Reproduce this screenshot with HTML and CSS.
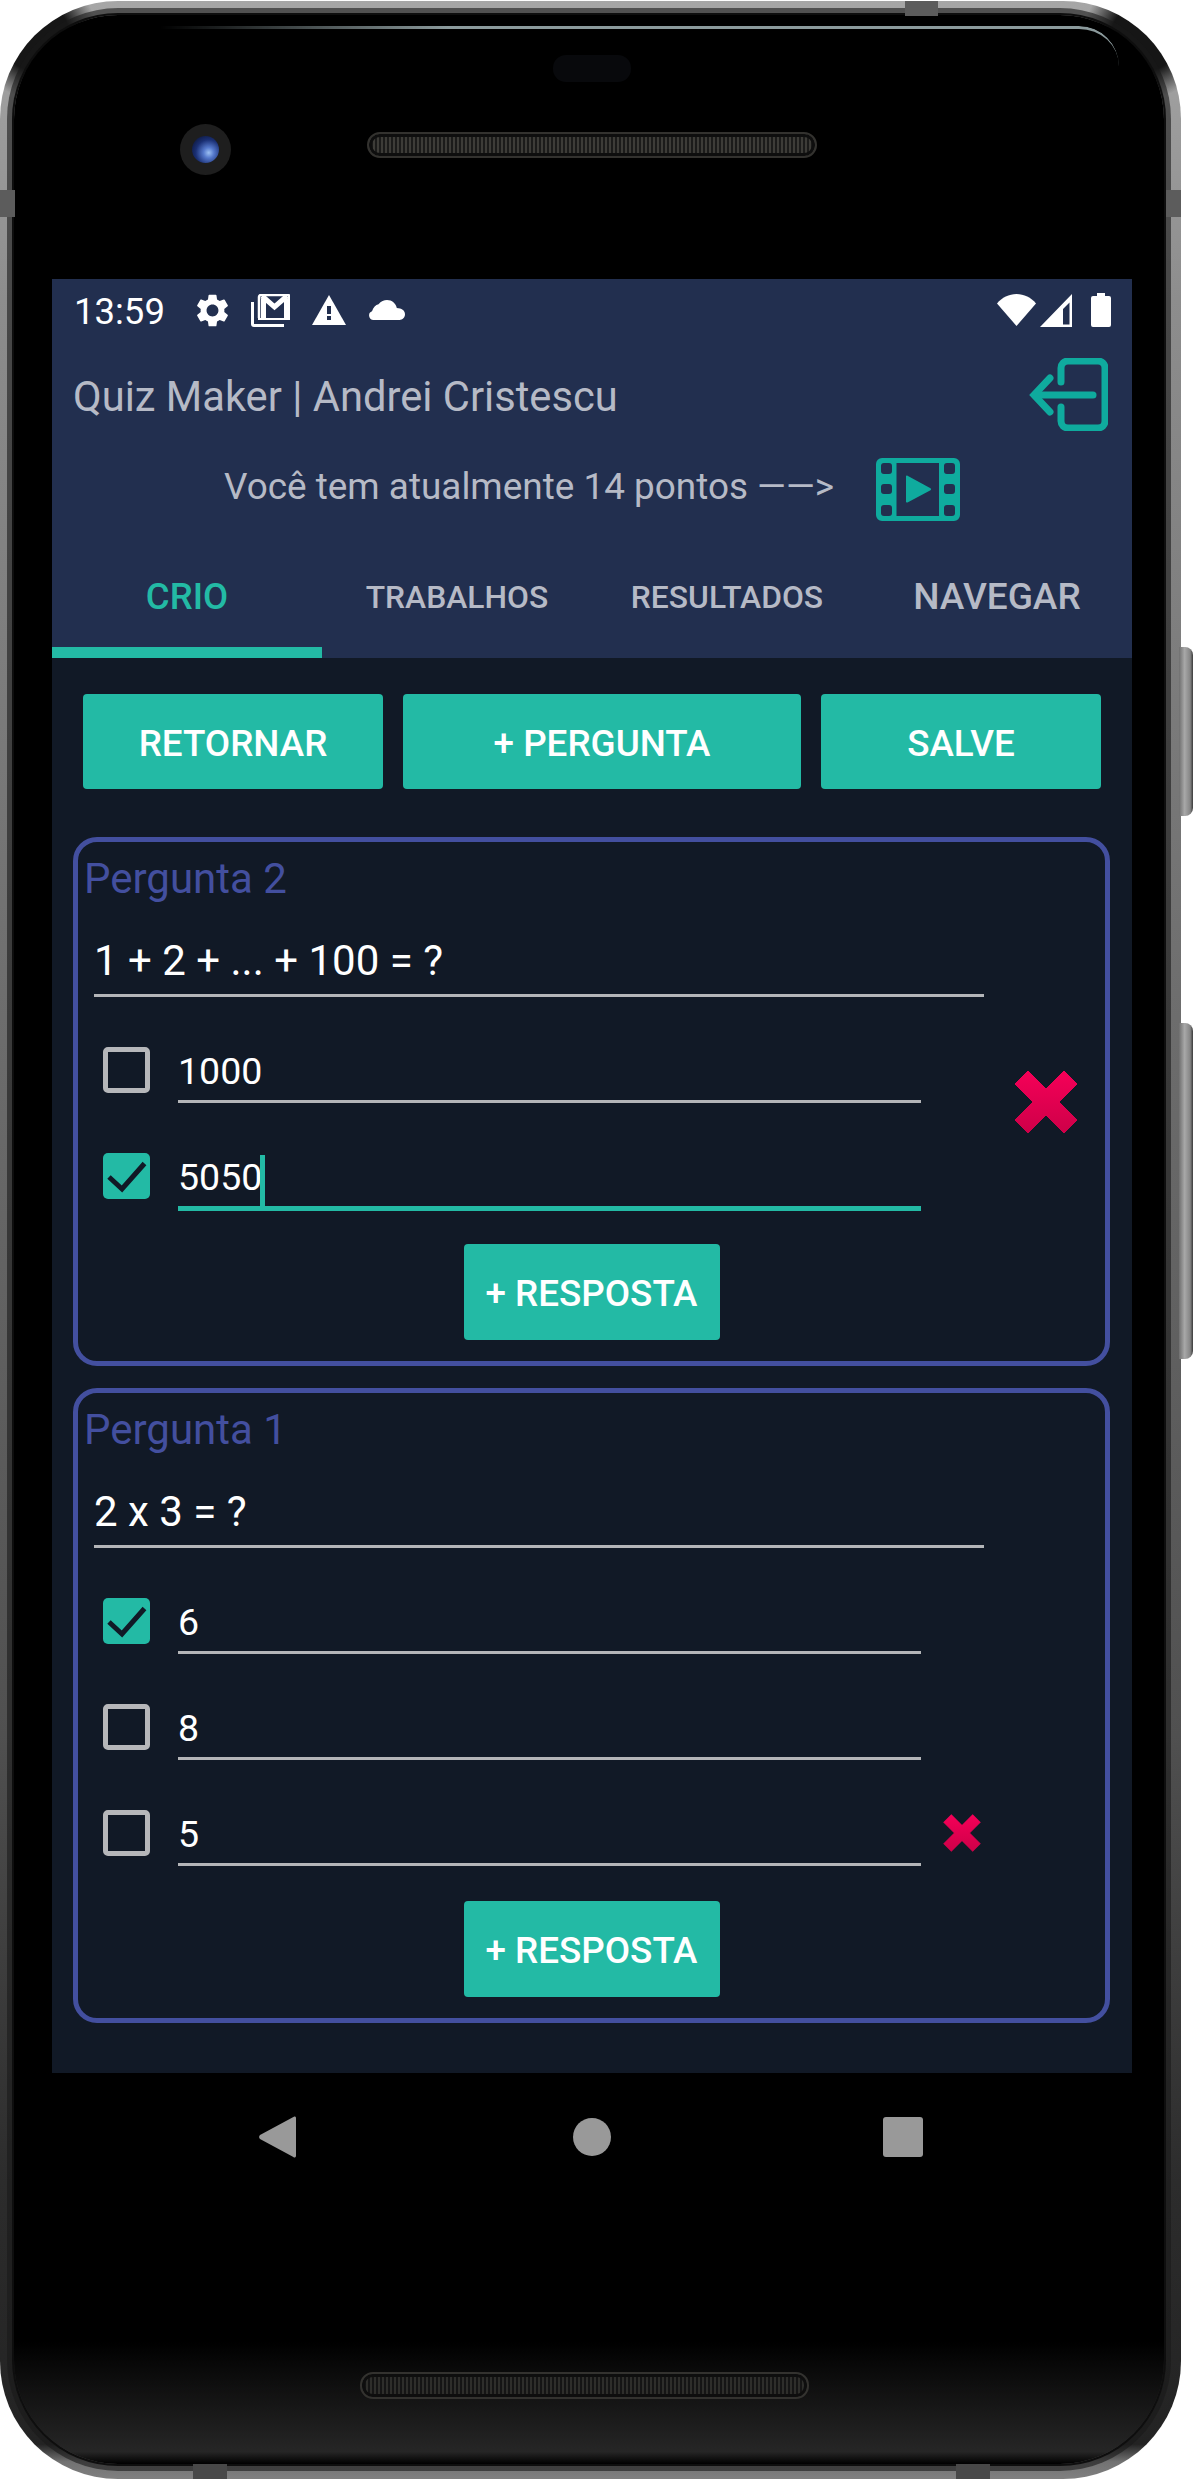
FILE: index.html
```html
<!DOCTYPE html>
<html lang="pt">
<head>
<meta charset="utf-8">
<title>Quiz Maker</title>
<link rel="stylesheet" href="styles.css">
</head>
<body>
<div class="device">
  <span class="side-btn power"></span>
  <span class="side-btn volume"></span>
  <span class="seam seam-top"></span>
  <span class="seam seam-left"></span>
  <span class="seam seam-right"></span>
  <span class="seam seam-bl"></span>
  <span class="seam seam-br"></span>
  <span class="glass-line"></span>
  <div class="face">
    <div class="bezel-top">
      <div class="sensor"></div>
      <div class="cam-row">
        <div class="camera"><div class="lens"></div></div>
        <div class="speaker"></div>
      </div>
    </div>

    <main class="screen">
      <header class="appbar">
        <div class="status">
          <span class="time">13:59</span>
          <svg class="st st-gear" viewBox="2.6 2 18.8 20"><path fill="#fff" d="M19.14 12.94c.04-.3.06-.61.06-.94 0-.32-.02-.64-.07-.94l2.03-1.58a.49.49 0 0 0 .12-.61l-1.92-3.32a.488.488 0 0 0-.59-.22l-2.39.96c-.5-.38-1.03-.7-1.62-.94l-.36-2.54a.484.484 0 0 0-.48-.41h-3.84c-.24 0-.43.17-.47.41l-.36 2.54c-.59.24-1.13.57-1.62.94l-2.39-.96c-.22-.08-.47 0-.59.22L2.74 8.87c-.12.21-.08.47.12.61l2.03 1.58c-.05.3-.09.63-.09.94s.02.64.07.94l-2.03 1.58a.49.49 0 0 0-.12.61l1.92 3.32c.12.22.37.29.59.22l2.39-.96c.5.38 1.03.7 1.62.94l.36 2.54c.05.24.24.41.48.41h3.84c.24 0 .44-.17.47-.41l.36-2.54c.59-.24 1.13-.56 1.62-.94l2.39.96c.22.08.47 0 .59-.22l1.92-3.32c.12-.22.07-.47-.12-.61l-2.01-1.58zM12 15.6c-1.98 0-3.6-1.62-3.6-3.6s1.62-3.6 3.6-3.6 3.6 1.62 3.6 3.6-1.62 3.6-3.6 3.6z"/></svg>
          <svg class="st st-mail" viewBox="0 0 39 33"><path fill="none" stroke="#fff" stroke-width="3" d="M1.5 8v22a1.5 1.5 0 0 0 1.500 1.500h30"/><path fill="none" stroke="#fff" stroke-width="2.500" d="M8 24V3a2 2 0 0 1 2-2h27a1 1 0 0 1 1 1v22"/><path fill="none" stroke="#fff" stroke-width="5" d="M11 2l12.500 11L36 2"/><path fill="#fff" d="M10 25h5V5h-5zM33 25h4V5h-4z"/><path fill="#fff" d="M7 24h32v2H7z"/></svg>
          <svg class="st st-warn" viewBox="0 0 34 30"><path fill="#fff" d="M17 0L34 30H0z"/><path fill="#222f4f" d="M15 11h4v8h-4zM15 21h4v4h-4z"/></svg>
          <svg class="st st-cloud" viewBox="0 0 36 20"><path fill="#fff" d="M4.500 20A4.500 4.500 0 0 1 3 11.300C4.500 7 6.500 5 9.500 4.300 12 1 15 0 18 0c5 0 8.800 3.200 9.800 8.100C32.500 8.200 36 10.500 36 14.300c0 3.200-2.500 5.700-5.500 5.700z"/></svg>
          <span class="status-gap"></span>
          <svg class="st st-wifi" viewBox="0 0 39 32"><path fill="#fff" d="M19.500 32L0 9.500C5 3.500 12 0 19.500 0S34 3.500 39 9.500z"/></svg>
          <svg class="st st-signal" viewBox="0 0 32 33"><path fill="#fff" fill-rule="evenodd" d="M32 0v33H0zM29.500 8.500L23 15v15.500h6.500z"/></svg>
          <svg class="st st-battery" viewBox="0 0 20 34"><path fill="#fff" d="M6 0h8v3h4a2 2 0 0 1 2 2v27a2 2 0 0 1-2 2H2a2 2 0 0 1-2-2V5a2 2 0 0 1 2-2h4z"/></svg>
        </div>
        <div class="title-row">
          <h1 class="title">Quiz Maker | Andrei Cristescu</h1>
          <svg class="ic-logout" viewBox="0 0 79 73"><g fill="none" stroke="#0fab9e" stroke-width="7" stroke-linecap="round"><path d="M32 24V10a7 7 0 0 1 7-7h30a7 7 0 0 1 7 7v53a7 7 0 0 1-7 7H39a7 7 0 0 1-7-7V49"/><path d="M64 37H6"/><path d="M21 20L5 37l16 17" stroke-linejoin="miter"/></g></svg>
        </div>
        <div class="notice-row">
          <span class="notice">Você tem atualmente 14 pontos ——&gt;</span>
          <svg class="ic-film" viewBox="0 0 84 63"><path fill="#0fab9e" fill-rule="evenodd" d="M6 0h72a6 6 0 0 1 6 6v51a6 6 0 0 1-6 6H6a6 6 0 0 1-6-6V6a6 6 0 0 1 6-6zM8 5a3 3 0 0 0-3 3v5a3 3 0 0 0 3 3h5a3 3 0 0 0 3-3V8a3 3 0 0 0-3-3zM8 26a3 3 0 0 0-3 3v4a3 3 0 0 0 3 3h5a3 3 0 0 0 3-3v-4a3 3 0 0 0-3-3zM8 47a3 3 0 0 0-3 3v5a3 3 0 0 0 3 3h5a3 3 0 0 0 3-3v-5a3 3 0 0 0-3-3zM71 5a3 3 0 0 0-3 3v5a3 3 0 0 0 3 3h5a3 3 0 0 0 3-3V8a3 3 0 0 0-3-3zM71 26a3 3 0 0 0-3 3v4a3 3 0 0 0 3 3h5a3 3 0 0 0 3-3v-4a3 3 0 0 0-3-3zM71 47a3 3 0 0 0-3 3v5a3 3 0 0 0 3 3h5a3 3 0 0 0 3-3v-5a3 3 0 0 0-3-3zM20.500 5v53H63V5zM30 18.500c0-.8.8-1.200 1.500-.8l23 12.600c.7.500.7 1.400 0 1.900l-23 12.200c-.7.400-1.500 0-1.500-.8z"/></svg>
        </div>
        <nav class="tabs">
          <span class="tab tab-active">CRIO</span>
          <span class="tab tab-small">TRABALHOS</span>
          <span class="tab tab-small">RESULTADOS</span>
          <span class="tab">NAVEGAR</span>
        </nav>
      </header>

      <section class="content">
        <div class="actions">
          <button class="btn btn-back">RETORNAR</button>
          <button class="btn btn-add">+ PERGUNTA</button>
          <button class="btn btn-save">SALVE</button>
        </div>

        <article class="card">
          <div class="card-label">Pergunta 2</div>
          <div class="question">1 + 2 + ... + 100 = ?</div>
          <div class="answers">
            <div class="answer">
              <span class="check"></span>
              <div class="field">1000</div>
            </div>
            <div class="answer">
              <span class="check check-on"><svg viewBox="0 0 46 46"><path fill="none" stroke="#111926" stroke-width="5" d="M5.500 24l13 12L41 10.500"/></svg></span>
              <div class="field field-focus">5050<span class="caret"></span></div>
            </div>
          </div>
          <button class="btn btn-answer">+ RESPOSTA</button>
          <svg class="del del-big" viewBox="0 0 64 64"><defs><linearGradient id="redx" gradientUnits="userSpaceOnUse" x1="0" y1="0" x2="0" y2="64"><stop offset="0" stop-color="#f60058"/><stop offset="1" stop-color="#cd0048"/></linearGradient></defs><path fill="url(#redx)" stroke="url(#redx)" stroke-width="1" stroke-linejoin="round" d="M14 1l18 18L50 1l13 13-18 18 18 18-13 13-18-18-18 18L1 50l18-18L1 14z"/></svg>
        </article>

        <article class="card">
          <div class="card-label">Pergunta 1</div>
          <div class="question">2 x 3 = ?</div>
          <div class="answers">
            <div class="answer">
              <span class="check check-on"><svg viewBox="0 0 46 46"><path fill="none" stroke="#111926" stroke-width="5" d="M5.500 24l13 12L41 10.500"/></svg></span>
              <div class="field">6</div>
            </div>
            <div class="answer">
              <span class="check"></span>
              <div class="field">8</div>
            </div>
            <div class="answer">
              <span class="check"></span>
              <div class="field">5</div>
              <svg class="del del-small" viewBox="0 0 64 64"><path fill="url(#redx)" stroke="url(#redx)" stroke-width="1" stroke-linejoin="round" d="M14 1l18 18L50 1l13 13-18 18 18 18-13 13-18-18-18 18L1 50l18-18L1 14z"/></svg>
            </div>
          </div>
          <button class="btn btn-answer">+ RESPOSTA</button>
        </article>
      </section>
    </main>

    <div class="sysnav">
      <svg class="nav-back" viewBox="0 0 37 42"><path fill="#999" d="M37 2v38a1.500 1.500 0 0 1-2.600 1L1 23a3 3 0 0 1 0-4L34.400 1A1.500 1.500 0 0 1 37 2z"/></svg>
      <span class="nav-home"></span>
      <span class="nav-recent"></span>
    </div>
    <div class="speaker speaker-bottom"></div>
  </div>
</div>
</body>
</html>
```

FILE: styles.css
```css
* { box-sizing: border-box; }
html, body { margin: 0; padding: 0; background: #fff; }
body { font-family: Roboto, "Liberation Sans", sans-serif; width: 1194px; height: 2480px; overflow: hidden; }

.device {
  position: relative;
  width: 1181px;
  height: 2478px;
  margin-top: 1px;
  padding: 14px 17px 15px 14px;
  border-radius: 118px;
  background:
    radial-gradient(circle 62px at 36px 36px, #161616 55%, transparent 100%),
    radial-gradient(circle 62px at 1145px 36px, #161616 55%, transparent 100%),
    linear-gradient(180deg, #a6a6a6 0, #8d8d8d 12%, #6e6e6e 40%, #505050 70%, #2c2c2c 88%, #232323 98.600%, #727272 99.300%, #808080 100%);
}
.side-btn {
  position: absolute;
  left: 1179px;
  width: 14px;
  border-radius: 0 8px 8px 0;
  background: linear-gradient(90deg, #6f6f6f, #a8a8a8 40%, #858585 80%, #3a3a3a);
}
.power { top: 646px; height: 169px; }
.volume { top: 1022px; height: 336px; }
.seam { position: absolute; background: #5c5c5c; }
.seam-top { top: 0; left: 905px; width: 33px; height: 15px; }
.seam-left { top: 189px; left: 0; width: 15px; height: 27px; }
.seam-right { top: 189px; right: 0; width: 15px; height: 27px; }
.seam-bl { bottom: 0; left: 193px; width: 34px; height: 15px; background: #484848; }
.seam-br { bottom: 0; left: 956px; width: 34px; height: 15px; background: #484848; }
.glass-line {
  position: absolute;
  z-index: 1;
  top: 25px;
  left: 160px;
  right: 62px;
  height: 40px;
  border-top: 3px solid #8b9a9c;
  border-top-right-radius: 70px;
  -webkit-mask-image: linear-gradient(90deg, transparent, #000 30%);
  mask-image: linear-gradient(90deg, transparent, #000 30%);
}
.face {
  height: 100%;
  padding: 0 32px 0 38px;
  border-radius: 104px;
  background: linear-gradient(180deg, #000 0, #000 95%, #262626 99.500%, #000 100%);
  box-shadow: 0 0 0 2px #0e0e0e, 0 0 0 7px rgba(25, 25, 25, .6);
}

.bezel-top { height: 264px; padding-top: 40px; }
.sensor { width: 78px; height: 27px; margin: 0 auto; border-radius: 13px; background: #08090c; }
.cam-row { display: flex; align-items: flex-start; gap: 136px; margin-top: 42px; padding-left: 128px; }
.camera {
  display: flex;
  align-items: center;
  justify-content: center;
  width: 51px;
  height: 51px;
  border-radius: 50%;
  background: #1e1e1e;
}
.lens {
  width: 27px;
  height: 27px;
  border-radius: 50%;
  background: radial-gradient(circle at 62% 62%, #9cc0f2 0, #5579cc 22%, #1a2f73 55%, #060a1c 100%);
}
.speaker {
  width: 450px;
  height: 26px;
  margin-top: 8px;
  border: 2px solid #33322f;
  border-radius: 13px;
  background: repeating-linear-gradient(90deg, #3d3c38 0, #3d3c38 2px, #1b1b1a 2px, #1b1b1a 4px);
  box-shadow: inset 0 0 0 3px #0e0e0e;
}
.speaker-bottom { width: 449px; height: 27px; margin: 193px 0 0 308px; background: repeating-linear-gradient(90deg, #2e2e2b 0, #2e2e2b 2px, #151515 2px, #151515 4px); }

.screen { height: 1794px; background: #111926; display: flex; flex-direction: column; }
.appbar { background: #222f4f; height: 379px; color: #b6bac6; }
.status { display: flex; align-items: center; height: 62px; padding: 0 21px 0 22px; }
.time { width: 90px; color: #fff; font-size: 36.500px; line-height: 62px; margin-top: 4px; white-space: nowrap; }
.st { display: block; flex: none; }
.st-gear { width: 31px; height: 33px; margin-left: 33px; }
.st-mail { width: 39px; height: 33px; margin-left: 23px; }
.st-warn { width: 34px; height: 30px; margin-left: 22px; }
.st-cloud { width: 36px; height: 20px; margin-left: 23px; }
.status-gap { flex: 1; }
.st-wifi { width: 39px; height: 32px; }
.st-signal { width: 32px; height: 33px; margin-left: 4px; }
.st-battery { width: 20px; height: 34px; margin-left: 19px; }

.title-row { display: flex; align-items: center; justify-content: space-between; height: 106px; padding: 0 24px 0 21px; }
.title { margin: 0; padding-top: 6px; font-size: 41.700px; font-weight: 400; line-height: 60px; white-space: nowrap; }
.ic-logout { display: block; width: 79px; height: 73px; }
.notice-row { display: flex; align-items: center; height: 85px; padding-left: 172px; }
.notice { font-size: 36.900px; line-height: 50px; width: 652px; padding-bottom: 6px; white-space: nowrap; }
.ic-film { display: block; width: 84px; height: 63px; }
.tabs { display: flex; height: 126px; }
.tab {
  display: flex;
  align-items: center;
  justify-content: center;
  width: 270px;
  padding-top: 14px;
  border-bottom: 11px solid transparent;
  font-size: 37px;
  font-weight: 500;
}
.tab-small { font-size: 31.800px; }
.tab-active { color: #23baa5; border-bottom-color: #23baa5; font-size: 36.500px; }

.content { flex: 1; padding: 36px 22px 0 21px; }
.actions { display: flex; gap: 20px; padding-left: 10px; margin-bottom: 48px; }
.btn {
  display: block;
  border: 0;
  border-radius: 4px;
  background: #23baa5;
  color: #fff;
  font-family: inherit;
  font-size: 36.800px;
  font-weight: 500;
  padding: 3px 0 0;
  white-space: nowrap;
}
.actions .btn { height: 95px; }
.btn-back { width: 300px; }
.btn-add { width: 398px; }
.btn-save { width: 280px; }

.card {
  position: relative;
  width: 1037px;
  margin-bottom: 22px;
  padding: 9px 0 21px;
  border: 5px solid #434f9f;
  border-radius: 24px;
}
.card-label { padding-left: 6px; color: #434f9f; font-size: 42px; line-height: 56px; }
.question {
  width: 890px;
  margin: 26px 0 0 16px;
  padding: 0 0 5px;
  border-bottom: 3px solid #b4b5b8;
  color: #fff;
  font-size: 42px;
  line-height: 56px;
}
.answers { display: flex; flex-direction: column; gap: 49px; margin-top: 49px; padding-left: 25px; }
.answer { display: flex; align-items: flex-start; height: 57px; }
.check {
  display: block;
  flex: none;
  width: 47px;
  height: 46px;
  margin: 1px 28px 0 0;
  border: 5px solid #b6b7ba;
  border-radius: 5px;
}
.check-on { border: 0; background: #23baa5; }
.check-on svg { display: block; width: 47px; height: 46px; }
.field {
  flex: none;
  width: 743px;
  padding: 0 0 4px;
  border-bottom: 3px solid #b4b5b8;
  color: #fff;
  font-size: 37.500px;
  line-height: 50px;
  height: 57px;
}
.field-focus { height: 59px; border-bottom: 5px solid #23baa5; }
.caret {
  display: inline-block;
  width: 5px;
  height: 51px;
  margin: -6px 0 -6px -2px;
  background: #23baa5;
  vertical-align: middle;
}
.btn-answer { width: 256px; height: 96px; margin: 35px auto 0; }
.del { display: block; }
.del-big { position: absolute; top: 228px; left: 936px; width: 64px; height: 64px; }
.del-small { flex: none; width: 38px; height: 38px; margin: 5px 0 0 22px; }

.sysnav { display: flex; align-items: center; height: 84px; margin-top: 22px; padding-left: 207px; }
.nav-back { display: block; width: 37px; height: 42px; }
.nav-home { width: 38px; height: 38px; margin-left: 277px; border-radius: 50%; background: #999; }
.nav-recent { width: 40px; height: 40px; margin-left: 272px; border-radius: 3px; background: #999; }
```
